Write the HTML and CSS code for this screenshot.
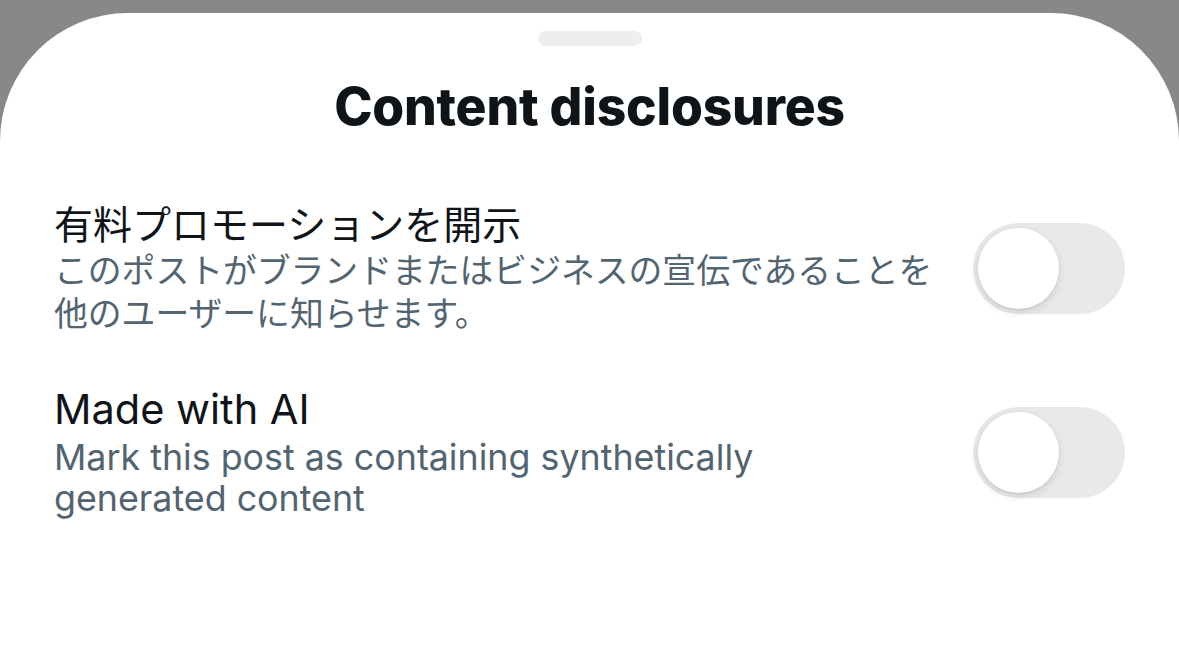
FILE: index.html
```html
<!DOCTYPE html>
<html lang="ja">
<head>
<meta charset="utf-8">
<title>Content disclosures</title>
<link rel="stylesheet" href="styles.css">
</head>
<body>
<div class="sheet">
  <div class="grabber"></div>
  <h1 class="title">Content disclosures</h1>
  <div class="rows">
    <div class="row row-jp">
      <div class="text">
        <div class="label">有料プロモーションを開示</div>
        <div class="desc">このポストがブランドまたはビジネスの宣伝であることを<br>他のユーザーに知らせます。</div>
      </div>
      <div class="toggle"><div class="knob"></div></div>
    </div>
    <div class="row row-en">
      <div class="text">
        <div class="label">Made with AI</div>
        <div class="desc">Mark this post as containing synthetically<br>generated content</div>
      </div>
      <div class="toggle"><div class="knob"></div></div>
    </div>
  </div>
</div>
</body>
</html>
```

FILE: styles.css
```css
html, body {
  margin: 0;
  padding: 0;
  height: 100%;
  background: #888888;
  overflow: hidden;
}
body {
  padding-top: 13px;
  box-sizing: border-box;
  font-family: Inter, "Noto Sans CJK JP", sans-serif;
}
.sheet {
  background: #ffffff;
  height: 100%;
  border-radius: 128px 128px 0 0;
  display: flex;
  flex-direction: column;
  align-items: stretch;
}
.grabber {
  align-self: center;
  width: 104px;
  height: 15px;
  border-radius: 8px;
  background: #eceef0;
  margin-top: 18px;
}
.title {
  margin: 30px 0 0;
  text-align: center;
  font-size: 51.6px;
  line-height: 60px;
  font-weight: 800;
  color: #0f1419;
  letter-spacing: -0.2px;
}
.rows {
  display: flex;
  flex-direction: column;
  padding: 0 54px 0 54px;
  margin-top: 65px;
  gap: 50px;
}
.row {
  display: flex;
  align-items: center;
  justify-content: space-between;
}
.label {
  font-size: 39px;
  line-height: 48px;
  color: #0f1419;
  font-weight: 400;
}
.desc {
  font-size: 33.8px;
  line-height: 43px;
  color: #536471;
}
.row-en .label {
  font-size: 41.5px;
}
.row-en .desc {
  font-size: 35.8px;
  line-height: 41px;
  padding-top: 4px;
}
.toggle {
  width: 152px;
  height: 91px;
  border-radius: 46px;
  background: #e9e9eb;
  position: relative;
  flex: none;
}
.knob {
  position: absolute;
  left: 5px;
  top: 5px;
  width: 81px;
  height: 81px;
  border-radius: 50%;
  background: #ffffff;
  box-shadow: 0 3px 8px rgba(0,0,0,0.12), 0 1px 1px rgba(0,0,0,0.08);
}
```
